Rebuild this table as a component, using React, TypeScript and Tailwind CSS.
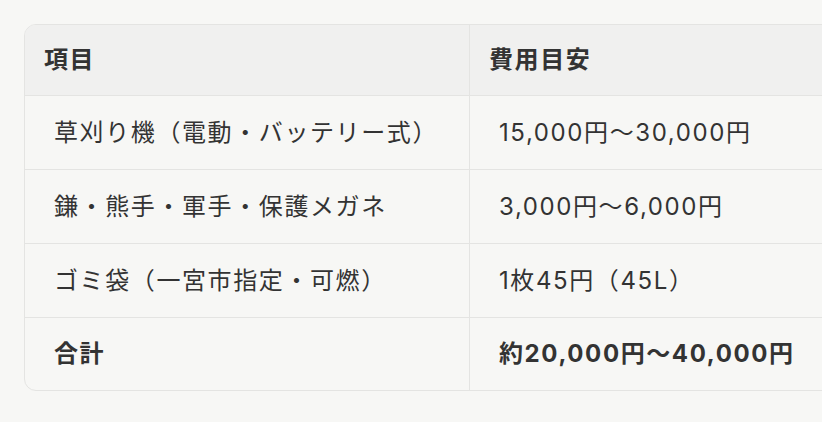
import React from "react";

const rows: [string, string][] = [
  ["草刈り機（電動・バッテリー式）", "15,000円～30,000円"],
  ["鎌・熊手・軍手・保護メガネ", "3,000円～6,000円"],
  ["ゴミ袋（一宮市指定・可燃）", "1枚45円（45L）"],
];

export default function App() {
  return (
    <div
      className="min-h-[422px] w-full overflow-hidden bg-[#f7f7f5] pl-6 pt-6 text-[#333333]"
      style={{ fontFamily: "Inter, 'Noto Sans CJK JP', sans-serif" }}
    >
      <div className="w-[880px] overflow-hidden rounded-[12px] border border-[#e4e4e2] text-[24px] tracking-[1.6px]">
        <div className="grid h-[70px] grid-cols-[445px_1fr] bg-[#f0f0ef] font-bold">
          <div className="flex items-center border-r border-[#e4e4e2] pl-[19px]">項目</div>
          <div className="flex items-center pl-[19px]">費用目安</div>
        </div>
        {rows.map(([a, b]) => (
          <div key={a} className="grid h-[74px] grid-cols-[445px_1fr] border-t border-[#e4e4e2]">
            <div className="flex items-center border-r border-[#e4e4e2] pl-[29px]">{a}</div>
            <div className="flex items-center pl-[29px]">{b}</div>
          </div>
        ))}
        <div className="grid h-[73px] grid-cols-[445px_1fr] border-t border-[#e4e4e2] font-bold">
          <div className="flex items-center border-r border-[#e4e4e2] pl-[29px]">合計</div>
          <div className="flex items-center pl-[29px]">約20,000円～40,000円</div>
        </div>
      </div>
    </div>
  );
}
